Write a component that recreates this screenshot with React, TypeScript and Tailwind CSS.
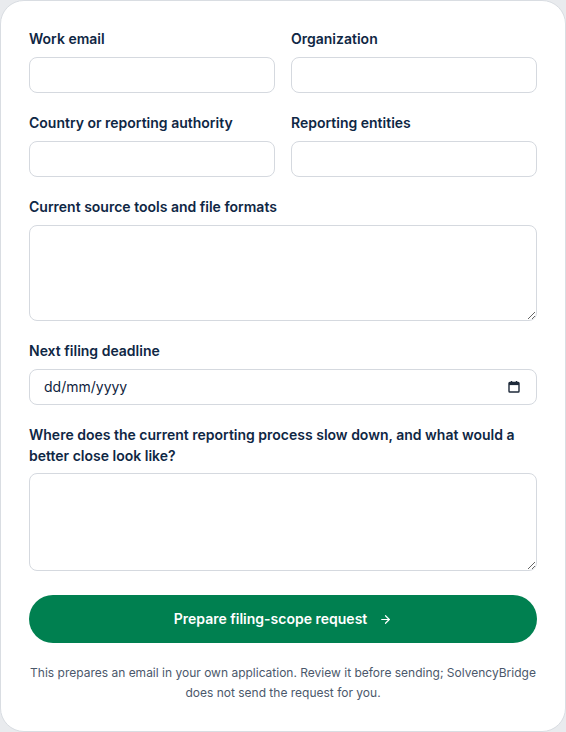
import React from "react";

const labelCls = "block text-sm leading-[21px] font-semibold text-[#0f2744] mb-2";
const inputCls =
  "block w-full h-9 rounded-lg border border-[#d5d9df] bg-white px-3 text-sm text-[#10243e] outline-none";

const Field: React.FC<{ label: string; children: React.ReactNode }> = ({ label, children }) => (
  <div className="flex flex-col">
    <label className={labelCls}>{label}</label>
    {children}
  </div>
);

export default function App() {
  return (
    <div
      className="min-h-screen bg-[#e9ebee]"
      style={{ fontFamily: "Inter, 'Noto Sans', sans-serif" }}
    >
      <div className="w-[566px] h-[732px] bg-white border border-[#d9dde2] rounded-3xl px-7 pt-[27px] flex flex-col">
        <div className="grid grid-cols-2 gap-x-4 gap-y-[19px]">
          <Field label="Work email">
            <input type="email" className={inputCls} />
          </Field>
          <Field label="Organization">
            <input type="text" className={inputCls} />
          </Field>
          <Field label="Country or reporting authority">
            <input type="text" className={inputCls} />
          </Field>
          <Field label="Reporting entities">
            <input type="text" className={inputCls} />
          </Field>
        </div>

        <div className="mt-[19px]">
          <Field label="Current source tools and file formats">
            <textarea className="block w-full h-24 rounded-lg border border-[#d5d9df] bg-white px-3 py-2 text-sm outline-none" />
          </Field>
        </div>

        <div className="mt-[19px]">
          <Field label="Next filing deadline">
            <div className="flex h-9 items-center justify-between rounded-lg border border-[#d5d9df] bg-white pl-[14px] pr-[15px]">
              <span className="text-sm text-[#10243e]">dd/mm/yyyy</span>
              <svg width="14" height="14" viewBox="0 0 14 14" fill="none">
                <rect x="2" y="2.5" width="10" height="9.5" rx="0.8" stroke="#1e2a3a" strokeWidth="1.4" />
                <rect x="2" y="2.5" width="10" height="2.6" fill="#1e2a3a" />
                <line x1="4.5" y1="1" x2="4.5" y2="3" stroke="#1e2a3a" strokeWidth="1.4" />
                <line x1="9.5" y1="1" x2="9.5" y2="3" stroke="#1e2a3a" strokeWidth="1.4" />
              </svg>
            </div>
          </Field>
        </div>

        <div className="mt-[19px]">
          <Field label="Where does the current reporting process slow down, and what would a better close look like?">
            <textarea className="block w-full h-[98px] rounded-lg border border-[#d5d9df] bg-white px-3 py-2 text-sm outline-none -mt-px" />
          </Field>
        </div>

        <button className="mt-6 h-12 w-full rounded-full bg-[#008050] text-white text-sm font-semibold flex items-center justify-center gap-3">
          Prepare filing-scope request
          <svg width="13" height="13" viewBox="0 0 24 24" fill="none" stroke="currentColor" strokeWidth="2.2" strokeLinecap="round" strokeLinejoin="round">
            <path d="M5 12h14" />
            <path d="m12 5 7 7-7 7" />
          </svg>
        </button>

        <p className="mt-5 -mx-3 text-center text-[12px] leading-5 text-[#4b586b]">
          <span className="whitespace-nowrap">
            This prepares an email in your own application. Review it before sending; SolvencyBridge
          </span>
          <br />
          does not send the request for you.
        </p>
      </div>
    </div>
  );
}
